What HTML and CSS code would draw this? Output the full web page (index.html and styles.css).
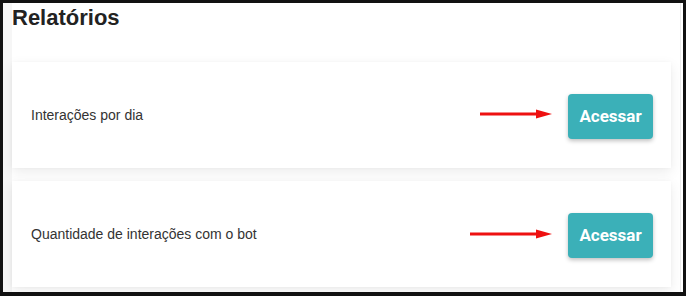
FILE: index.html
```html
<!DOCTYPE html>
<html lang="pt-BR">
<head>
<meta charset="utf-8">
<title>Relatórios</title>
<link rel="stylesheet" href="styles.css">
</head>
<body>
<div class="frame">
  <div class="side"></div>
  <main class="content">
    <h1 class="title">Relatórios</h1>
    <div class="cards">
      <section class="card">
        <span class="card-label">Interações por dia</span>
        <svg class="arrow arrow-short" width="72" height="12" viewBox="0 0 72 12">
          <line x1="0" y1="6" x2="58" y2="6" stroke="#ee1111" stroke-width="3"/>
          <polygon points="56,1.5 72,6 56,10.5" fill="#ee1111"/>
        </svg>
        <button class="btn">Acessar</button>
      </section>
      <section class="card">
        <span class="card-label">Quantidade de interações com o bot</span>
        <svg class="arrow arrow-long" width="82" height="12" viewBox="0 0 82 12">
          <line x1="0" y1="6" x2="68" y2="6" stroke="#ee1111" stroke-width="3"/>
          <polygon points="66,1.5 82,6 66,10.5" fill="#ee1111"/>
        </svg>
        <button class="btn">Acessar</button>
      </section>
    </div>
  </main>
</div>
</body>
</html>
```

FILE: styles.css
```css
* { box-sizing: border-box; }
html, body {
  margin: 0;
  padding: 0;
  background: #ffffff;
}
.frame {
  width: 686px;
  height: 296px;
  border: 3px solid #111111;
  border-bottom-width: 4px;
  display: flex;
  overflow: hidden;
  background: #ffffff;
}
.side {
  width: 9px;
  flex: none;
  background: #f6f6f6;
}
.content {
  flex: 1;
  padding: 3px 9px 0 0;
  border-right: 1px solid #ececec;
  margin-right: 2px;
}
.title {
  margin: 0 0 32px 0;
  font-family: "Liberation Sans", Arial, sans-serif;
  font-weight: bold;
  font-size: 22px;
  line-height: 24px;
  color: #222222;
}
.cards {
  display: flex;
  flex-direction: column;
  gap: 13px;
}
.card {
  height: 106px;
  display: flex;
  align-items: center;
  padding: 0 18px 0 19px;
  background: #ffffff;
  box-shadow: 0 4px 12px rgba(0, 0, 0, 0.08), 0 0 3px rgba(0, 0, 0, 0.03);
}
.card-label {
  font-family: "Liberation Sans", Arial, sans-serif;
  font-size: 14px;
  color: #333333;
}
.arrow {
  margin-left: auto;
  margin-right: 16px;
  flex: none;
}
.arrow-short { margin-top: -2px; }
.btn {
  flex: none;
  width: 85px;
  height: 45px;
  border: none;
  border-radius: 4px;
  background: #3bb0b8;
  color: #ffffff;
  font-family: Roboto, "Liberation Sans", sans-serif;
  font-weight: bold;
  font-size: 17px;
  box-shadow: 0 2px 4px rgba(0, 0, 0, 0.25);
  margin-top: 2px;
}
```
